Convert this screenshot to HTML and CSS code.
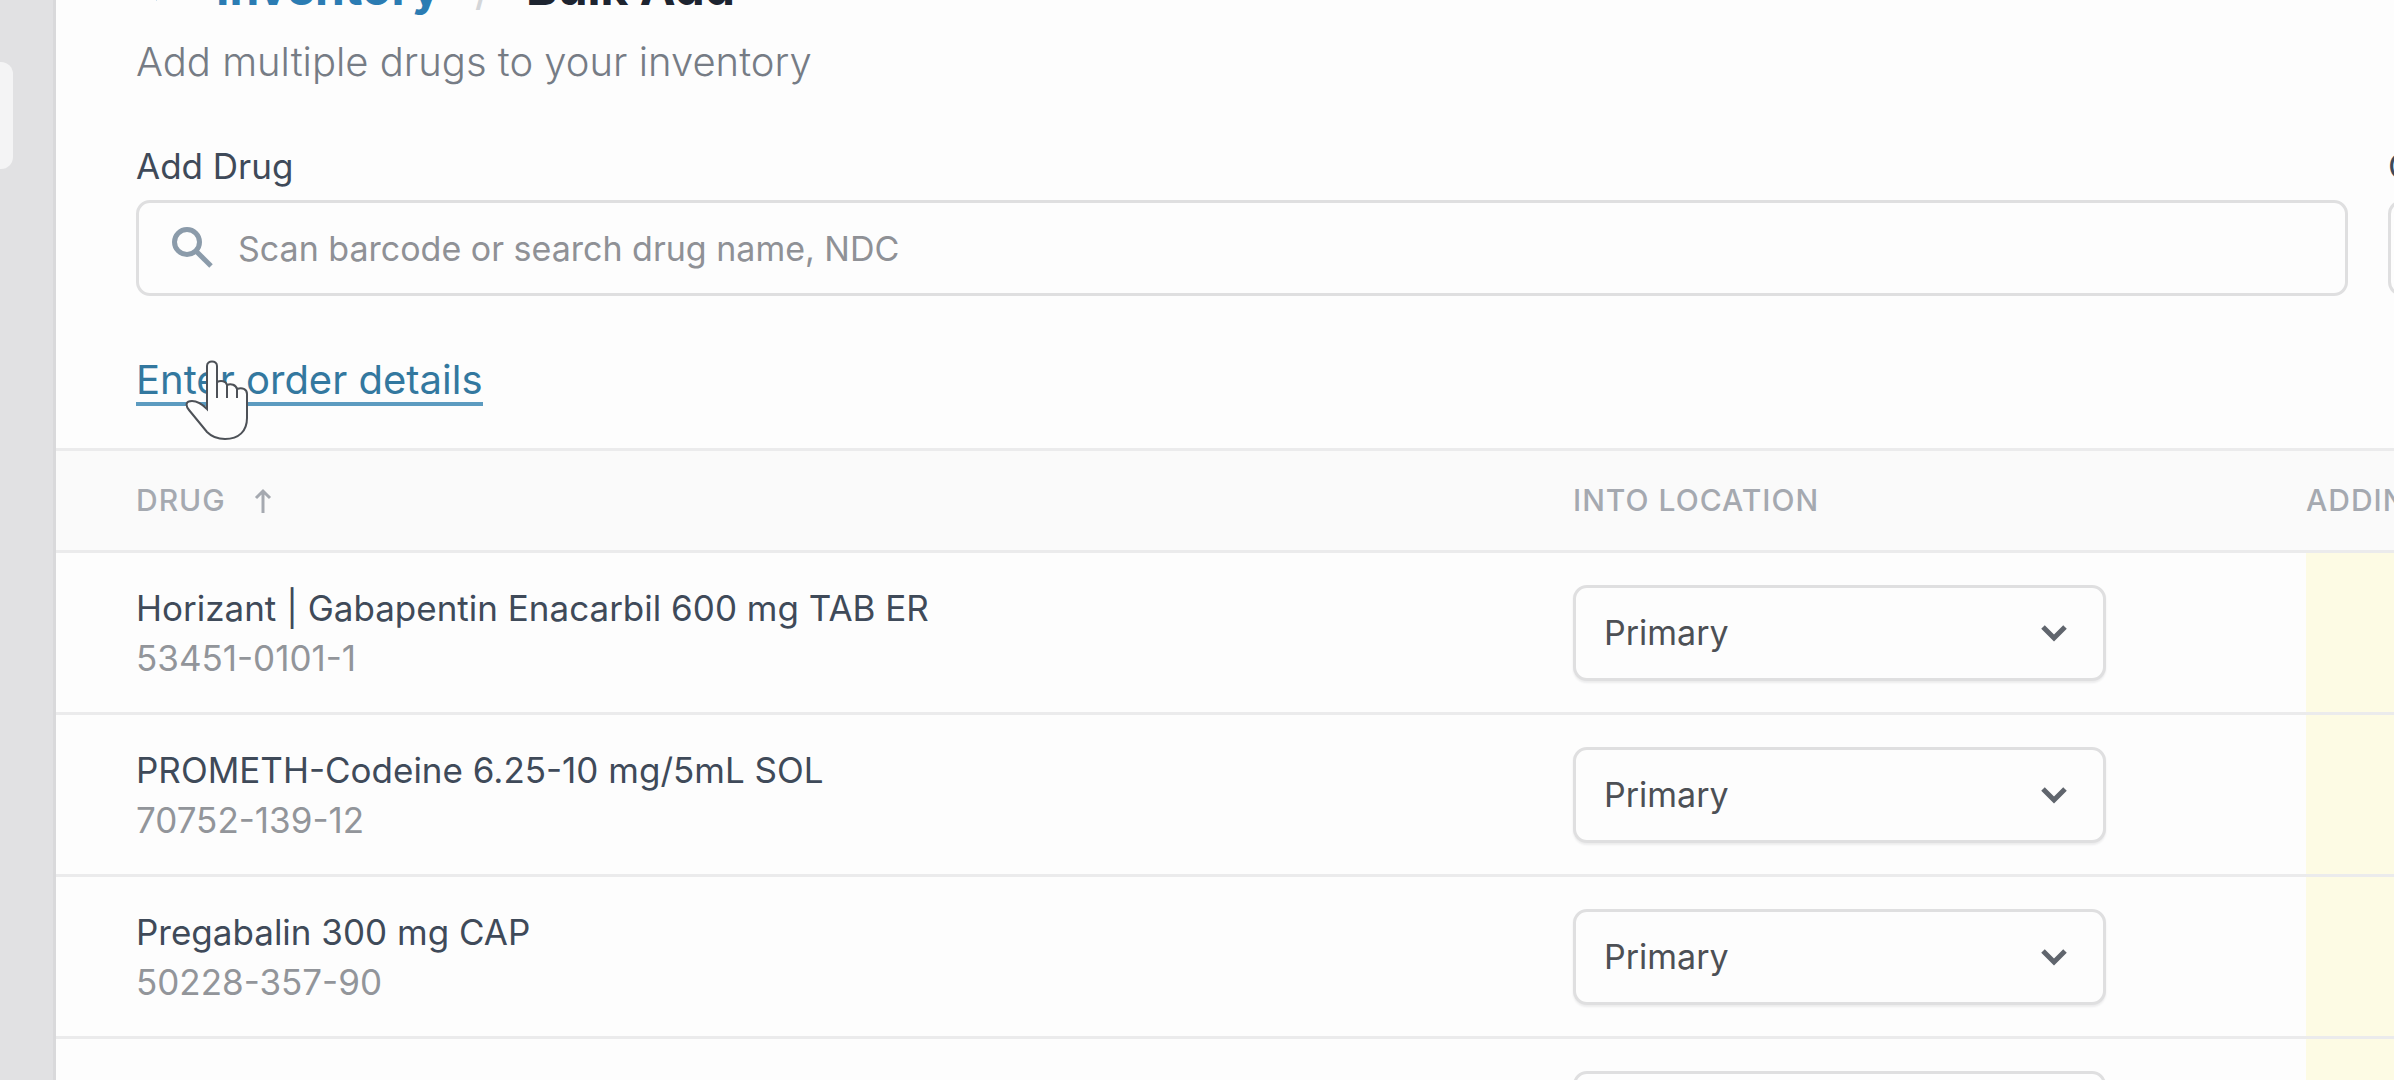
FILE: index.html
```html
<!DOCTYPE html>
<html lang="en">
<head>
<meta charset="utf-8">
<title>Bulk Add</title>
<link rel="stylesheet" href="styles.css">
</head>
<body>
<div class="app">
  <aside class="sidebar"><div class="sidebar-tab"></div></aside>
  <main class="main">
    <header class="page-header">
      <h1 class="breadcrumb">
        <svg class="back-icon" viewBox="0 0 40 40" aria-hidden="true"><path d="M22 11 L12 21 L22 31"/></svg>
        <a class="breadcrumb-link" href="#">Inventory</a>
        <span class="breadcrumb-separator">/</span>
        <span>Bulk Add</span>
      </h1>
      <p class="subtitle">Add multiple drugs to your inventory</p>
    </header>

    <form class="add-form">
      <div class="field">
        <label class="field-label" for="drug">Add Drug</label>
        <div class="search">
          <svg class="search-icon" viewBox="0 0 42 42" aria-hidden="true"><circle cx="15" cy="15" r="12.5"/><path d="M24 24 L39 39"/></svg>
          <input class="search-input" id="drug" type="text" placeholder="Scan barcode or search drug name, NDC">
        </div>
      </div>
      <div class="field">
        <label class="field-label" for="quantity">Q</label>
        <input class="text-input" id="quantity" type="text">
      </div>
    </form>

    <div class="order">
      <a class="order-link" href="#">Enter order details</a>
      <svg class="pointer" viewBox="0 0 64 80" aria-hidden="true"><path d="M22 49 V6 C22 0 32 0 32 6 V22 C36 20 41 21 42 25 C46 23 51 25 52 29 C57 27 62 29 62 34 V58 C62 71 54 79 40 79 C32 79 27 77 22 72 L4 50 C0 45 1 41 7 41 C13 41 18 45 22 49 Z"/><path d="M32 22 V38 M42 24 V38 M52 28 V38"/></svg>
    </div>

    <table class="drugs">
      <thead>
        <tr>
          <th class="col-drug" scope="col">DRUG<svg class="sort-icon" viewBox="0 0 18 26" aria-hidden="true"><path d="M9 25 V3 M2 10 L9 3 L16 10"/></svg></th>
          <th class="col-location" scope="col">INTO LOCATION</th>
          <th class="col-adding" scope="col">ADDING</th>
        </tr>
      </thead>
      <tbody>
        <tr>
          <td class="col-drug"><div class="drug-name">Horizant | Gabapentin Enacarbil 600 mg TAB ER</div><div class="drug-code">53451-0101-1</div></td>
          <td><div class="select-box"><select class="select" aria-label="Location"><option>Primary</option></select><svg class="chevron" viewBox="0 0 26 18" aria-hidden="true"><path d="M2 3 L13 14 L24 3"/></svg></div></td>
          <td class="adding"></td>
        </tr>
        <tr>
          <td class="col-drug"><div class="drug-name">PROMETH-Codeine 6.25-10 mg/5mL SOL</div><div class="drug-code">70752-139-12</div></td>
          <td><div class="select-box"><select class="select" aria-label="Location"><option>Primary</option></select><svg class="chevron" viewBox="0 0 26 18" aria-hidden="true"><path d="M2 3 L13 14 L24 3"/></svg></div></td>
          <td class="adding"></td>
        </tr>
        <tr>
          <td class="col-drug"><div class="drug-name">Pregabalin 300 mg CAP</div><div class="drug-code">50228-357-90</div></td>
          <td><div class="select-box"><select class="select" aria-label="Location"><option>Primary</option></select><svg class="chevron" viewBox="0 0 26 18" aria-hidden="true"><path d="M2 3 L13 14 L24 3"/></svg></div></td>
          <td class="adding"></td>
        </tr>
        <tr>
          <td class="col-drug"></td>
          <td><div class="select-box"><select class="select" aria-label="Location"></select></div></td>
          <td class="adding"></td>
        </tr>
      </tbody>
    </table>
  </main>
</div>
</body>
</html>
```
FILE: styles.css
```css
* { box-sizing: border-box; }

body {
  margin: 0;
  background: #fdfdfd;
  color: #3f4a59;
  font-family: Inter, "Liberation Sans", sans-serif;
  font-size: 34px;
}

.app {
  display: flex;
  height: 100vh;
  overflow: hidden;
}

.sidebar {
  flex: none;
  width: 56px;
  padding-top: 62px;
  background: #e1e1e3;
  border-right: 3px solid #d9d9db;
}

.sidebar-tab {
  width: 13px;
  height: 107px;
  background: #f4f4f5;
  border-radius: 0 12px 12px 0;
}

.main {
  flex: 1;
  min-width: 0;
  overflow: hidden;
}

/* The page is scrolled so that the title is mostly out of view. */
.page-header {
  margin-top: -42px;
  padding: 0 80px;
}

.breadcrumb {
  display: flex;
  align-items: center;
  margin: 0;
  font-size: 48px;
  line-height: 60px;
  font-weight: 700;
  color: #1d2430;
}

.back-icon {
  width: 40px;
  height: 40px;
  margin-right: 40px;
  fill: none;
  stroke: #2b7cb3;
  stroke-width: 4;
}

.breadcrumb-link { color: #2b7cb3; text-decoration: none; }

.breadcrumb-separator {
  margin: 0 34px;
  font-weight: 400;
  color: #d4d6d9;
}

.subtitle {
  margin: 18px 0 0;
  font-size: 40px;
  line-height: 52px;
  font-weight: 300;
  color: #767c85;
}

.add-form {
  display: grid;
  grid-template-columns: 1fr 200px;
  gap: 40px;
  margin: 56px -194px 0 80px;
}

.field-label {
  display: block;
  margin-bottom: 12px;
  font-size: 35px;
  line-height: 44px;
}

.search {
  display: flex;
  align-items: center;
  gap: 24px;
  height: 96px;
  padding: 0 33px;
  border: 3px solid #dfdfe0;
  border-radius: 14px;
}

.search-icon {
  flex: none;
  width: 42px;
  height: 42px;
  fill: none;
  stroke: #8b9baa;
  stroke-width: 5;
}

.search-input {
  flex: 1;
  min-width: 0;
  padding: 0;
  border: 0;
  outline: 0;
  background: none;
  font: inherit;
  color: inherit;
}

.search-input::placeholder { color: #8f9196; opacity: 1; }

.text-input {
  display: block;
  width: 100%;
  height: 96px;
  border: 3px solid #dfdfe0;
  border-radius: 14px;
  background: none;
  font: inherit;
}

.order {
  position: relative;
  padding: 62px 80px 42px;
  font-size: 40px;
  line-height: 44px;
}

.order-link {
  display: block;
  width: fit-content;
  border-bottom: 4px solid #5c9bc0;
  color: #33789f;
  text-decoration: none;
}

.pointer {
  position: absolute;
  left: 129px;
  top: 64px;
  width: 64px;
  height: 80px;
  fill: #fdfdfd;
  stroke: #4d5157;
  stroke-width: 2;
}

.drugs {
  width: calc(100% + 200px);
  border-collapse: collapse;
  table-layout: fixed;
}

.drugs tr { border-top: 3px solid #ebebec; }

.drugs th {
  height: 102px;
  padding: 0 0 2px;
  background: #fafafa;
  font-size: 30px;
  font-weight: 500;
  letter-spacing: 1px;
  text-align: left;
  color: #a5a9b0;
}

.drugs td {
  height: 162px;
  padding: 0;
}

.drugs .col-drug { padding-left: 80px; }
.col-location { width: 733px; }
.col-adding { width: 288px; }

.sort-icon {
  width: 18px;
  height: 26px;
  margin-left: 28px;
  vertical-align: -3px;
  fill: none;
  stroke: #a5a9b0;
  stroke-width: 3;
}

.drug-name,
.drug-code {
  font-size: 35px;
  line-height: 50px;
}

.drug-code { color: #92959a; }

.adding { background: #fdfbe4; }

.select-box {
  display: grid;
  align-items: center;
  width: 533px;
}

.select {
  grid-area: 1 / 1;
  appearance: none;
  width: 100%;
  height: 96px;
  padding: 0 28px;
  border: 3px solid #dfdfe0;
  border-radius: 14px;
  background: #fdfdfd;
  box-shadow: 0 2px 2px #ececed;
  font: inherit;
  color: #4d5055;
}

.chevron {
  grid-area: 1 / 1;
  justify-self: end;
  width: 26px;
  height: 18px;
  margin-right: 39px;
  fill: none;
  stroke: #60656d;
  stroke-width: 5;
  pointer-events: none;
}
```
